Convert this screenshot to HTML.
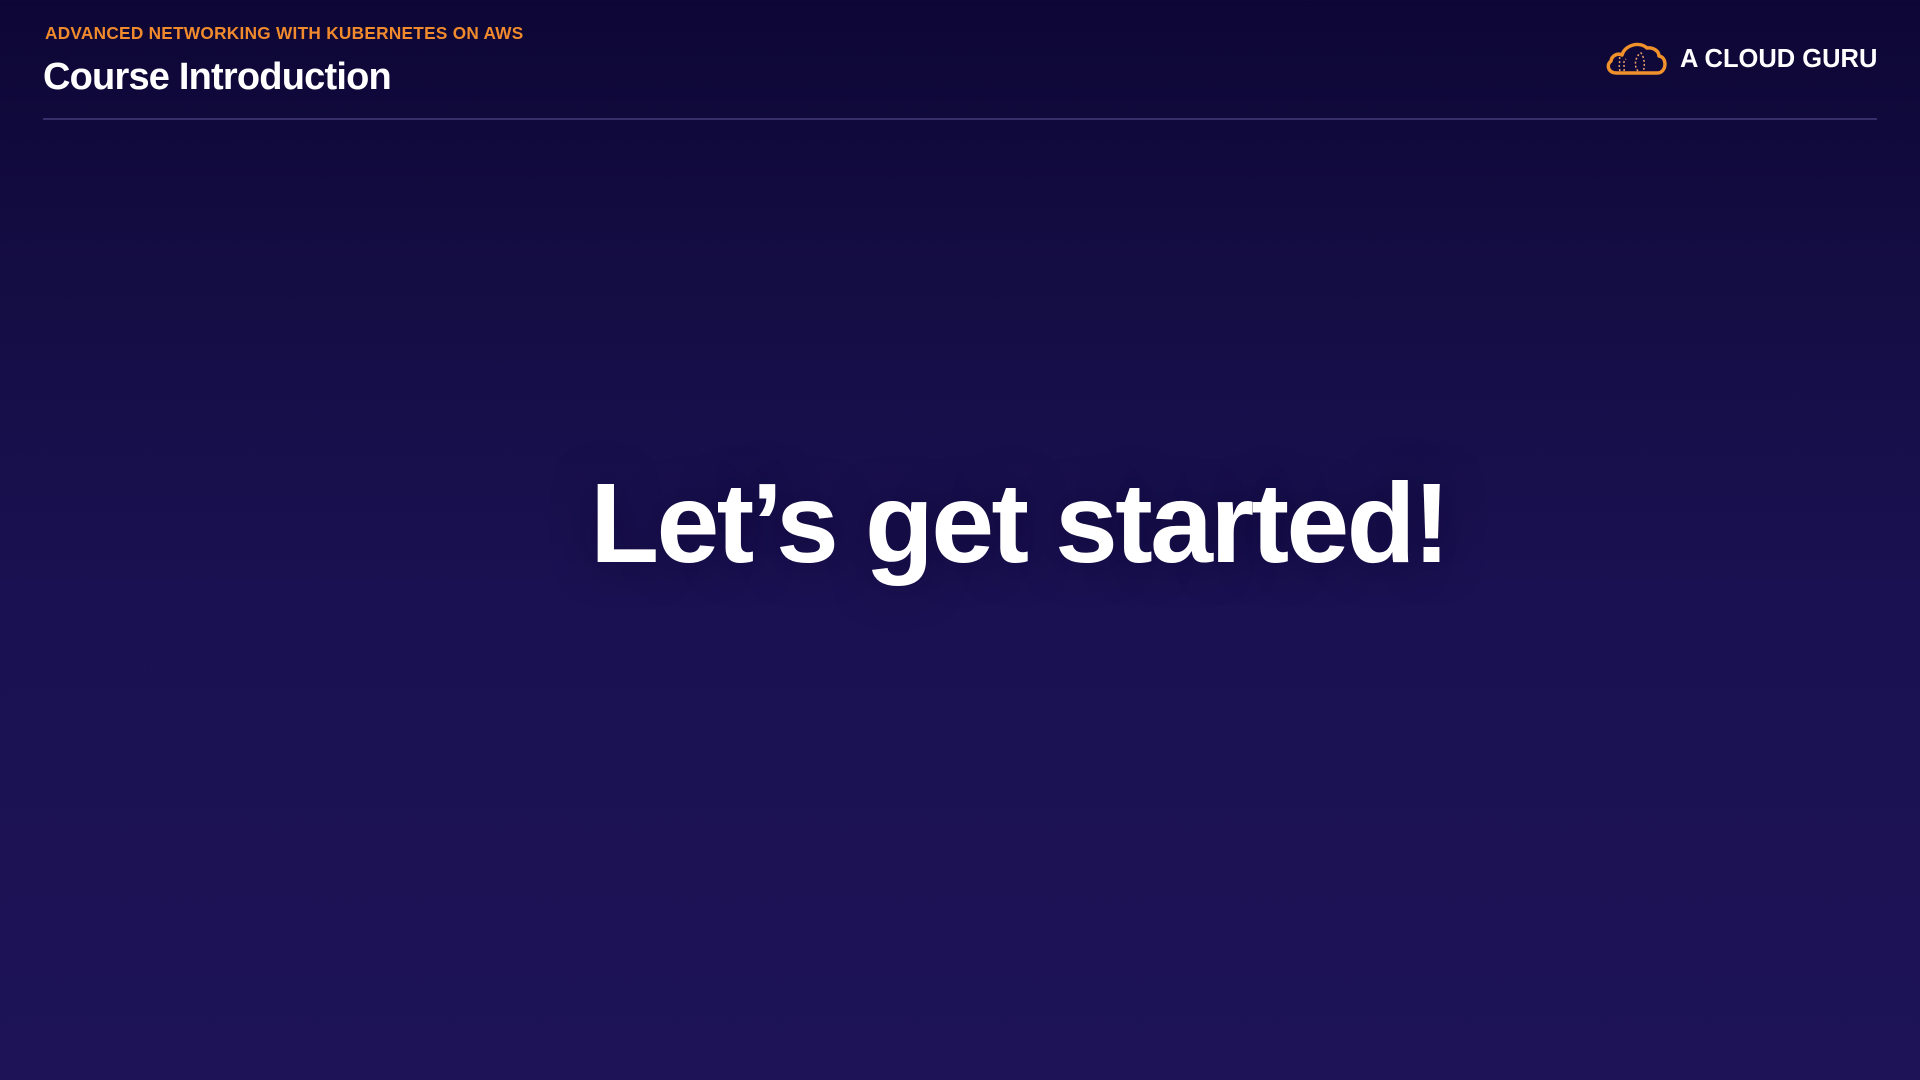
<!DOCTYPE html>
<html><head><meta charset="utf-8"><style>
html,body{margin:0;padding:0;}
body{width:1920px;height:1080px;overflow:hidden;position:relative;
background:linear-gradient(180deg,#0d0635 0%,#140d43 25%,#1a1152 55%,#1d1356 100%);
font-family:"Liberation Sans",sans-serif;}
.sub{position:absolute;left:45px;top:23px;color:#f08a2c;font-weight:700;font-size:17.2px;letter-spacing:0.3px;white-space:nowrap;}
.title{position:absolute;left:43px;top:56px;color:#fff;font-weight:700;font-size:38px;letter-spacing:-0.8px;white-space:nowrap;}
.line{position:absolute;left:43px;top:118px;width:1834px;height:2px;background:#35306a;}
.logo{position:absolute;left:1680px;top:45px;color:#fff;font-weight:700;font-size:25.5px;letter-spacing:0px;white-space:nowrap;}
.main{position:absolute;left:59px;width:1920px;top:458px;text-align:center;color:#fff;font-weight:700;font-size:113px;letter-spacing:-2.7px;line-height:130px;white-space:nowrap;text-shadow:0 0 40px rgba(10,5,40,0.5);}
</style></head><body>
<div class="sub">ADVANCED NETWORKING WITH KUBERNETES ON AWS</div>
<div class="title">Course Introduction</div>
<div class="line"></div>
<svg style="position:absolute;left:1603px;top:38px" width="66" height="40" viewBox="0 0 66 40">
<path d="M14 35 C5 35 3 27 8 23 C9 17 15 15 19 17 C22 7 36 3 44 10 C50 9 56 13 56 18 C63 19 64 30 58 34 C57 35 55 35 53 35 Z" fill="none" stroke="#f0912c" stroke-width="3.5" stroke-linejoin="round"/>
<path d="M17 33 C15 27 18 22 16 18 M21 33 C22 28 19 24 23 21 M35 33 C30 28 33 17 38 15 C42 20 42 30 40 33" fill="none" stroke="#e9a06a" stroke-width="1.5" stroke-dasharray="2 2"/>
</svg>
<div class="logo">A CLOUD GURU</div>
<div class="main">Let’s get started!</div>
</body></html>
